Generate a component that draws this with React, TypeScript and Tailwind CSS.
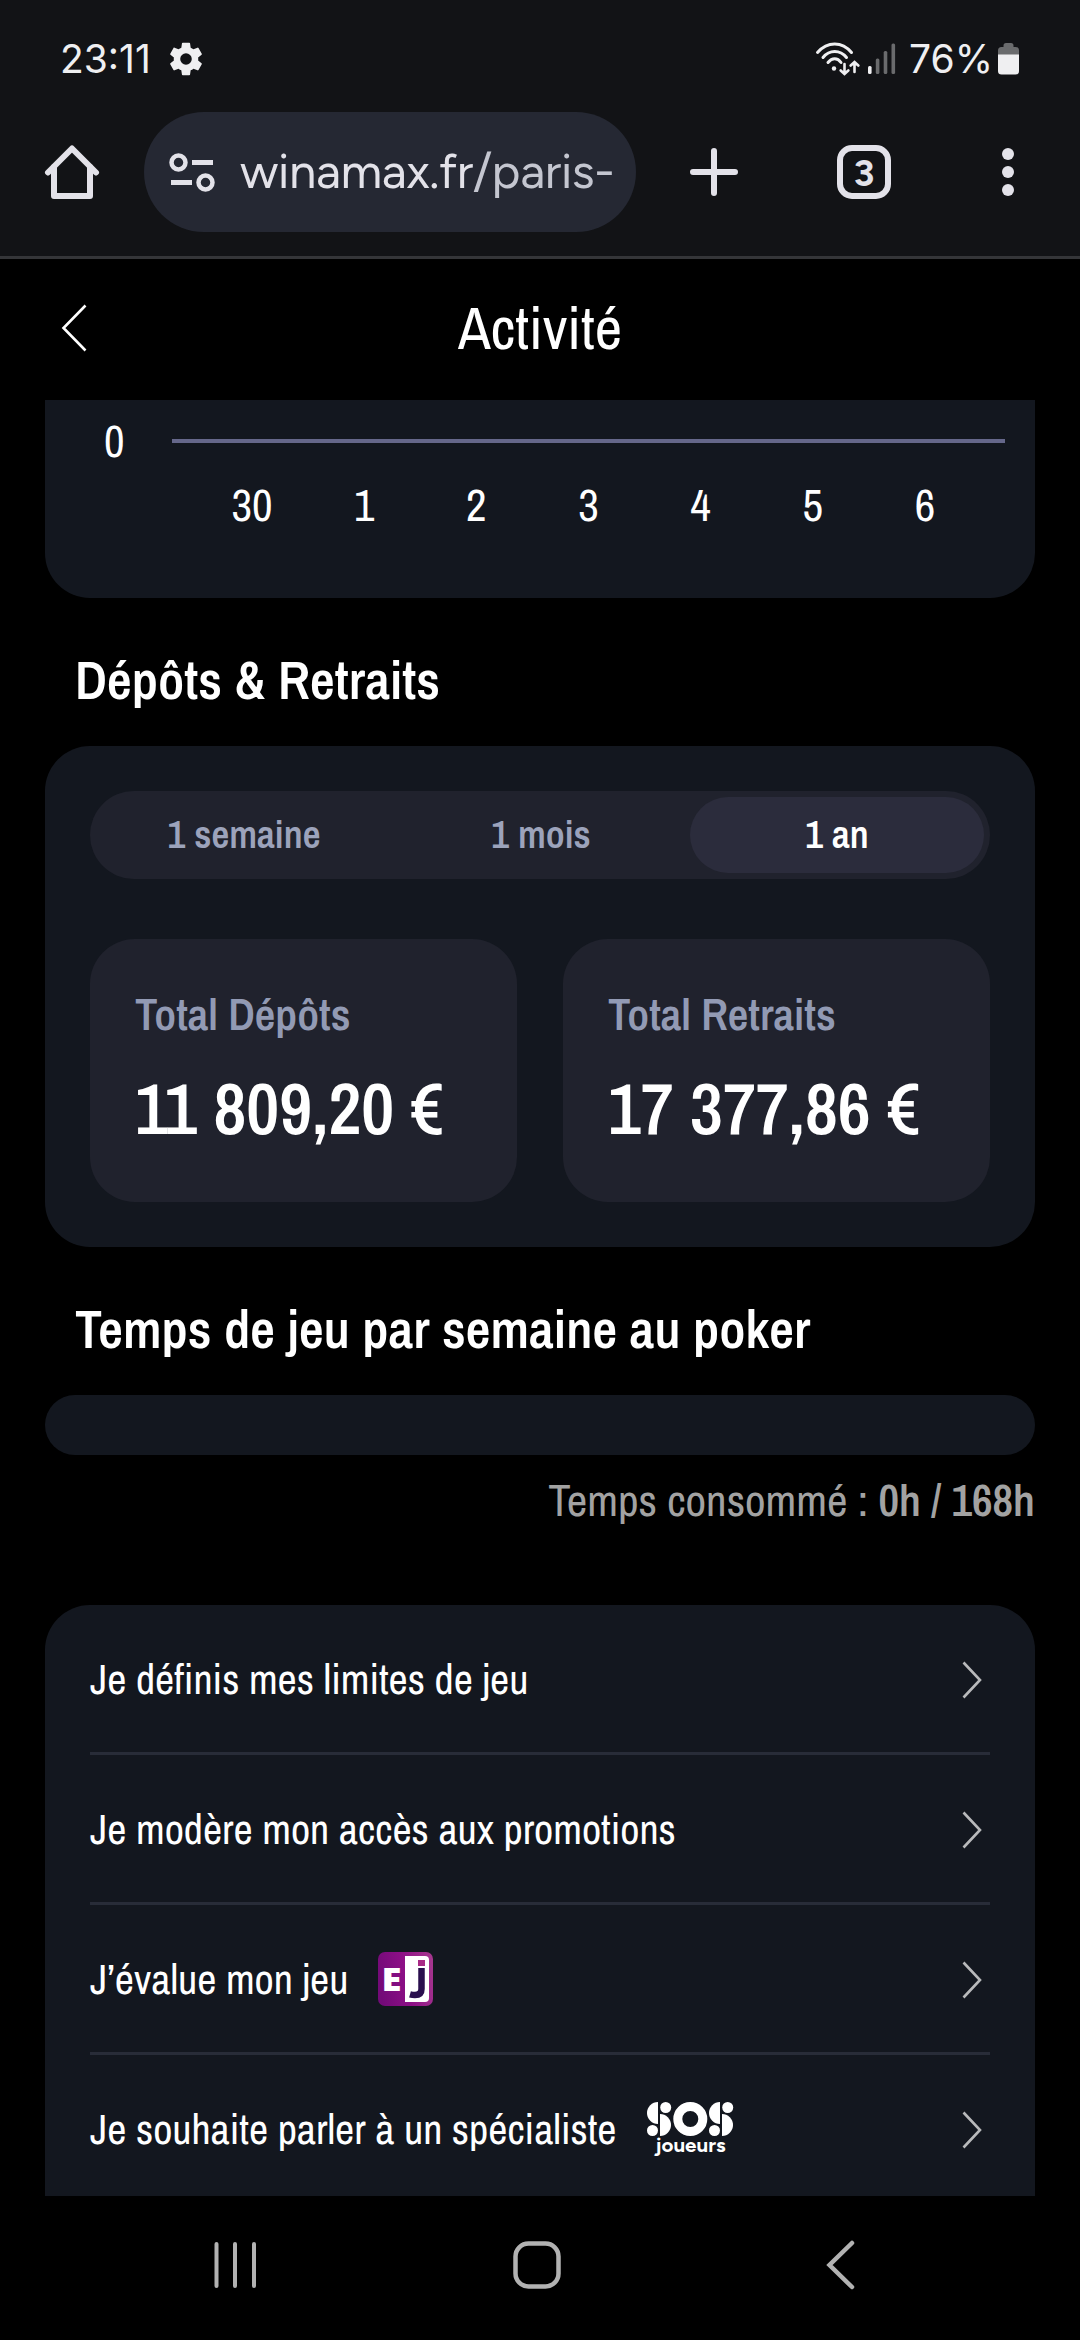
import type { ReactNode } from "react";

const days = ["30", "1", "2", "3", "4", "5", "6"];

const periods = [
  { label: "1 semaine", active: false },
  { label: "1 mois", active: false },
  { label: "1 an", active: true },
];

const totals = [
  { label: "Total Dépôts", amount: "11 809,20 €" },
  { label: "Total Retraits", amount: "17 377,86 €" },
];

function StatusBar() {
  return (
    <div className="flex h-[112px] items-center justify-between pt-[5px] pr-[61px] pl-[60px] font-['Inter',sans-serif] text-[#efeff1]">
      <div className="flex items-center">
        <span className="w-[109px] text-[39px] leading-none whitespace-nowrap">23:11</span>
        <svg className="h-[34px] w-[34px]" viewBox="2.4 2 19.2 20" fill="currentColor">
          <path d="M19.14 12.94c.04-.3.06-.61.06-.94 0-.32-.02-.64-.07-.94l2.03-1.58a.49.49 0 0 0 .12-.61l-1.92-3.32a.488.488 0 0 0-.59-.22l-2.39.96c-.5-.38-1.03-.7-1.62-.94l-.36-2.54a.484.484 0 0 0-.48-.41h-3.84c-.24 0-.43.17-.47.41l-.36 2.54c-.59.24-1.13.57-1.62.94l-2.39-.96c-.22-.08-.47 0-.59.22L2.74 8.87c-.12.21-.08.47.12.61l2.03 1.58c-.05.3-.09.63-.09.94s.02.64.07.94l-2.03 1.58a.49.49 0 0 0-.12.61l1.92 3.32c.12.22.37.29.59.22l2.39-.96c.5.38 1.03.7 1.62.94l.36 2.54c.05.24.24.41.48.41h3.84c.24 0 .44-.17.47-.41l.36-2.54c.59-.24 1.13-.56 1.62-.94l2.39.96c.22.08.47 0 .59-.22l1.92-3.32c.12-.22.07-.47-.12-.61l-2.01-1.58zM12 15.4a3.4 3.4 0 1 1 0-6.8 3.4 3.4 0 0 1 0 6.8z" />
        </svg>
      </div>
      <div className="flex items-center">
        {/* Wifi */}
        <svg className="h-[34px] w-[45px]" viewBox="0 0 45 34" fill="none" stroke="currentColor" strokeWidth="3" strokeLinecap="round">
          <path d="M2.500 10.500C12.500 -.8 27 -.8 36.500 10.500" />
          <path d="M8 15.500C14.500 7.500 25 7.500 31.500 15.500" />
          <path d="M13 20.500C17 15.500 22.500 15.500 26 20.500" />
          <circle cx="19" cy="26.500" r="2.200" fill="currentColor" stroke="none" />
          <path d="M29.500 22V31.500M25.700 28.500L29.500 32L33.300 28.500M39.500 30V20.500M35.700 23.500L39.500 20L43.300 23.500" strokeWidth="2.600" />
        </svg>
        {/* Signal */}
        <svg className="ml-[8px] h-[34px] w-[28px]" viewBox="0 0 28 34">
          <rect x="0" y="24" width="3.600" height="8" rx="1.500" fill="#efeff1" />
          <rect x="7.800" y="16.500" width="3.600" height="15.500" rx="1.500" fill="#6a6b6d" />
          <rect x="15.700" y="9" width="3.600" height="23" rx="1.500" fill="#6a6b6d" />
          <rect x="23.500" y="1.500" width="3.600" height="30.500" rx="1.500" fill="#6a6b6d" />
        </svg>
        <span className="ml-[13px] w-[89px] text-[39px] leading-none whitespace-nowrap">76%</span>
        <svg className="h-[34px] w-[21px]" viewBox="0 0 21 34">
          <path d="M5.500 3.500Q5.500 1 8 1H13Q15.500 1 15.500 3.500V5H17.500Q21 5 21 8.500V14H0V8.500Q0 5 3.500 5H5.500Z" fill="#6a6b6d" />
          <path d="M0 12.500H21V29Q21 32.500 17.500 32.500H3.500Q0 32.500 0 29Z" fill="#efeff1" />
        </svg>
      </div>
    </div>
  );
}

function BrowserBar() {
  return (
    <div className="flex h-[147px] items-start border-b-[3px] border-[#343538] pl-[44px] text-[#e3e2e9]">
      <svg className="mt-[32px] h-[56px] w-[56px]" viewBox="0 0 56 56" fill="none" stroke="currentColor" strokeWidth="6" strokeLinecap="round" strokeLinejoin="round">
        <path d="M4 28.500L28 4.500L52 28.500" />
        <path d="M10 23V52H46V23" />
      </svg>
      <div className="ml-[44px] flex h-[120px] w-[492px] items-center overflow-hidden rounded-full bg-[#252833] pl-[25px]">
        <svg className="h-[40px] w-[46px] shrink-0" viewBox="0 0 46 40" fill="none" stroke="currentColor">
          <circle cx="9.500" cy="10.500" r="7" strokeWidth="4.500" />
          <path d="M23 10.500H44" strokeWidth="5" />
          <circle cx="36.500" cy="30.500" r="7" strokeWidth="4.500" />
          <path d="M2 30.500H23" strokeWidth="5" />
        </svg>
        <span className="ml-[25px] pb-[3px] text-[49px] leading-none tracking-[-0.4px] whitespace-nowrap">
          winamax.fr<span className="text-[#c4c6d0]">/paris-</span>
        </span>
      </div>
      <svg className="mt-[32px] ml-[50px] h-[56px] w-[56px]" viewBox="0 0 56 56" stroke="currentColor" strokeWidth="6" strokeLinecap="round">
        <path d="M28 7V49M7 28H49" />
      </svg>
      <div className="mt-[33px] ml-[95px] flex h-[54px] w-[54px] items-center justify-center rounded-[15px] border-[6px] border-[#e3e2e9]">
        <span className="pt-[2px] text-[37px] leading-none font-bold">3</span>
      </div>
      <svg className="mt-[32px] ml-[105px] h-[56px] w-[24px]" viewBox="0 0 24 56" fill="currentColor">
        <circle cx="12" cy="10" r="6" />
        <circle cx="12" cy="28" r="6" />
        <circle cx="12" cy="46" r="6" />
      </svg>
    </div>
  );
}

function Heading({ children }: { children: ReactNode }) {
  return (
    <h2 className="pl-[30px] text-[54px] leading-[60px] font-semibold tracking-[0.06px] whitespace-nowrap">{children}</h2>
  );
}

function LogoEj() {
  return (
    <svg className="h-[54px] w-[55px]" viewBox="0 0 55 54">
      <defs>
        <linearGradient id="ej" x1="0" y1="0.500" x2="1" y2="0.300">
          <stop offset="0" stopColor="#730a78" />
          <stop offset="0.500" stopColor="#8d0f86" />
          <stop offset="1" stopColor="#a5358e" />
        </linearGradient>
      </defs>
      <rect width="55" height="54" rx="7" fill="url(#ej)" />
      <path d="M27 4H47Q51 4 51 8V46Q51 50 47 50H27Z" fill="#fff" />
      <text x="3.500" y="39" fontSize="32" fontWeight="800" textLength="20" lengthAdjust="spacingAndGlyphs" fill="#fff" className="font-['Open_Sans',sans-serif]">
        E
      </text>
      {/* the dot of the j is pink, its stem dark */}
      <rect x="40" y="8" width="7" height="6" fill="#a82a86" />
      <path d="M43.500 16V37Q43.500 43 37 43Q34.500 43 32 42.300" fill="none" stroke="#2a0f4e" strokeWidth="6.500" />
    </svg>
  );
}

function SosMark({ x }: { x: number }) {
  return (
    <g transform={`translate(${x} 0)`}>
      <path d="M11 0V22A11 11 0 0 1 11 0Z" />
      <circle cx="18.700" cy="5.500" r="5.500" />
      <path d="M13 12A11 11 0 0 1 13 34Z" />
      <circle cx="5.500" cy="28.500" r="5.500" />
    </g>
  );
}

function LogoSos() {
  return (
    <svg className="mt-[3px] h-[56px] w-[88px]" viewBox="0 0 88 56" fill="#fff">
      <SosMark x={0} />
      <circle cx="43.300" cy="17" r="12.500" fill="none" stroke="#fff" strokeWidth="9" />
      <SosMark x={62} />
      <text x="43.500" y="49.500" textAnchor="middle" fontSize="20" fontWeight="700" textLength="70" lengthAdjust="spacingAndGlyphs" className="font-['Figtree',Inter,sans-serif]">
        joueurs
      </text>
    </svg>
  );
}

const links = [
  { label: "Je définis mes limites de jeu", logo: null },
  { label: "Je modère mon accès aux promotions", logo: null },
  { label: "J’évalue mon jeu", logo: <LogoEj /> },
  { label: "Je souhaite parler à un spécialiste", logo: <LogoSos /> },
];

export default function App() {
  return (
    <div className="flex h-[2340px] w-[1080px] flex-col overflow-hidden bg-black font-['Archivo_Narrow','Liberation_Sans',sans-serif] text-white">
      <div className="bg-[#121316] font-['Google_Sans','Product_Sans','Figtree',Inter,sans-serif]">
        <StatusBar />
        <BrowserBar />
      </div>

      {/* Page header */}
      <header className="grid h-[141px] shrink-0 grid-cols-3 items-center px-[60px] pb-[3px]">
        <svg className="h-[50px] w-[28px]" viewBox="0 0 28 50" fill="none" stroke="#fff" strokeWidth="2.600">
          <path d="M25.500 2.500L3.500 25L25.500 47.500" />
        </svg>
        <h1 className="text-center text-[60px] leading-[70px]">Activité</h1>
      </header>

      <main className="flex h-[1796px] shrink-0 flex-col overflow-hidden px-[45px]">
        {/* Bottom of the weekly chart */}
        <section className="h-[198px] shrink-0 rounded-b-[45px] bg-[#13171f] pt-[15px] text-[45px] leading-[52px]">
          <div className="flex items-center">
            <span className="w-[127px] pl-[59px]">0</span>
            <div className="h-[4px] w-[833px] bg-[#65678a]" />
          </div>
          <div className="mt-[12px] ml-[151px] grid w-[785px] grid-cols-7 text-center">
            {days.map((day) => (
              <span key={day}>{day}</span>
            ))}
          </div>
        </section>

        <div className="mt-[52px]">
          <Heading>Dépôts &amp; Retraits</Heading>
        </div>

        <section className="mt-[36px] h-[501px] shrink-0 rounded-[45px] bg-[#13171f] px-[45px] pt-[45px]">
          <div className="grid h-[88px] grid-cols-3 gap-[3px] rounded-[45px] bg-[#20222d] p-[6px]">
            {periods.map(({ label, active }) => (
              <button
                key={label}
                className={
                  active
                    ? "rounded-[39px] bg-[#2b2c3c] pb-[2px] text-[39px] font-semibold text-white"
                    : "rounded-[39px] pb-[2px] pl-[2px] text-[39px] font-semibold text-[#9ca3bb]"
                }
              >
                {label}
              </button>
            ))}
          </div>
          <div className="mt-[60px] grid grid-cols-2 gap-[46px]">
            {totals.map(({ label, amount }) => (
              <div key={label} className="h-[263px] rounded-[45px] bg-[#20222d] pt-[45px] pl-[45px]">
                <p className="text-[45px] leading-[60px] font-semibold text-[#929ab4]">{label}</p>
                <p className="mt-[22px] text-[72px] leading-[84px] font-semibold whitespace-nowrap">{amount}</p>
              </div>
            ))}
          </div>
        </section>

        <div className="mt-[52px]">
          <Heading>Temps de jeu par semaine au poker</Heading>
        </div>
        <div className="mt-[36px] h-[60px] shrink-0 rounded-full bg-[#13171f]" />
        <p className="mt-[15px] text-right text-[45px] leading-[60px] text-[#a2a2a2]">
          Temps consommé : <span className="font-semibold">0h / 168h</span>
        </p>

        {/* Links */}
        <ul className="mt-[75px] h-[700px] shrink-0 divide-y-[3px] divide-[#282c38] rounded-t-[45px] bg-[#13171f] px-[45px]">
          {links.map(({ label, logo }) => (
            <li key={label} className="flex h-[150px] items-center last:h-[147px]">
              <span className="text-[42px] leading-[60px] whitespace-nowrap">{label}</span>
              <span className="ml-[30px]">{logo}</span>
              <svg className="mt-[3px] mr-[8px] ml-auto h-[38px] w-[20px]" viewBox="0 0 20 38" fill="none" stroke="#b8b9bb" strokeWidth="2.600">
                <path d="M1.500 1.500L18 19L1.500 36.500" />
              </svg>
            </li>
          ))}
        </ul>
      </main>

      {/* System navigation */}
      <nav className="flex h-[144px] shrink-0 items-center pb-[7px] text-[#b2b2b2]">
        <svg className="ml-[214px] h-[50px] w-[44px]" viewBox="0 0 44 50" stroke="currentColor" strokeWidth="4" strokeLinecap="round">
          <path d="M2.500 4V46M21 4V46M40 4V46" />
        </svg>
        <svg className="ml-[254px] h-[50px] w-[50px]" viewBox="0 0 50 50" fill="none" stroke="currentColor" strokeWidth="4.500">
          <rect x="3.500" y="3.500" width="43" height="43" rx="13" />
        </svg>
        <svg className="ml-[263px] h-[50px] w-[30px]" viewBox="0 0 30 50" fill="none" stroke="currentColor" strokeWidth="4.500" strokeLinecap="round">
          <path d="M27 3L4.500 25L27 47" />
        </svg>
      </nav>
    </div>
  );
}
